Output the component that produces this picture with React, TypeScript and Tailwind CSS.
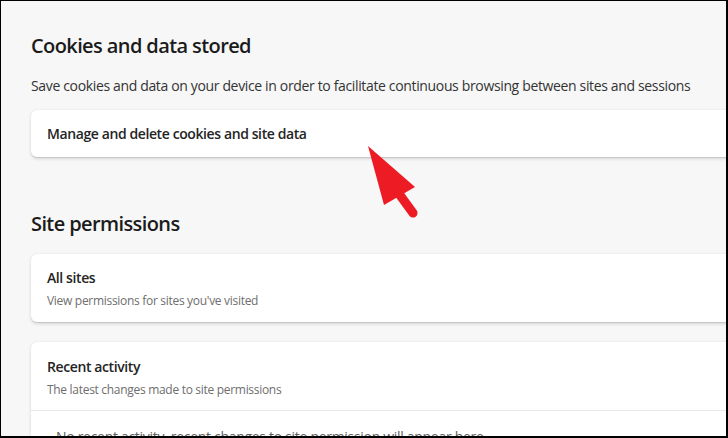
import React from 'react';

const cardShadow =
  'shadow-[0_1.6px_3.6px_rgba(0,0,0,0.13),0_0.3px_0.9px_rgba(0,0,0,0.11)]';

function Arrow() {
  return (
    <svg
      className="absolute left-0 top-0 pointer-events-none"
      width="728"
      height="438"
      viewBox="0 0 728 438"
    >
      <polygon points="367,145 383,204 414,186" fill="#ed1c24" />
      <line
        x1="396"
        y1="190"
        x2="412"
        y2="212"
        stroke="#ed1c24"
        strokeWidth="9"
        strokeLinecap="round"
      />
    </svg>
  );
}

export default function App() {
  return (
    <div
      className="relative w-[728px] h-[438px] overflow-hidden bg-[#f7f7f7] border-t border-l border-r-2 border-b-2 border-black text-[#1b1b1b]"
      style={{ fontFamily: '"Open Sans", "Noto Sans", sans-serif' }}
    >
      <div className="pl-[30px] pt-[31px] w-[760px]">
        {/* Cookies */}
        <h2 className="text-[20px] leading-[28px] font-[550] tracking-[-0.6px]">Cookies and data stored</h2>
        <p className="mt-4 text-[14px] leading-[20px] tracking-[-0.35px] text-[#333]">
          Save cookies and data on your device in order to facilitate continuous browsing between sites and sessions
        </p>
        <div className={`mt-[14px] h-[47px] flex items-center px-4 bg-white rounded-md ${cardShadow}`}>
          <span className="text-[14px] font-[550] tracking-[-0.4px] text-[#242424]">
            Manage and delete cookies and site data
          </span>
        </div>

        {/* Site permissions */}
        <h2 className="mt-[53px] text-[20px] leading-[28px] font-[550] tracking-[-0.6px]">Site permissions</h2>
        <div className={`mt-4 bg-white rounded-md px-4 pt-[14px] pb-[13px] ${cardShadow}`}>
          <div className="text-[14px] leading-[20px] font-[550] tracking-[-0.4px] text-[#242424]">All sites</div>
          <div className="mt-[5px] text-[12px] leading-[16px] tracking-[-0.3px] text-[#6e6e6e]">
            View permissions for sites you've visited
          </div>
        </div>

        <div className={`mt-5 bg-white rounded-md ${cardShadow}`}>
          <div className="px-4 pt-[15px] pb-[12px]">
            <div className="text-[14px] leading-[20px] font-[550] tracking-[-0.4px] text-[#242424]">Recent activity</div>
            <div className="mt-[5px] text-[12px] leading-[16px] tracking-[-0.3px] text-[#6e6e6e]">
              The latest changes made to site permissions
            </div>
          </div>
          <div className="border-t border-[#e8e8e8] pl-[25px] pt-4 pb-4">
            <div className="text-[14px] leading-[20px] tracking-[-0.3px] text-[#616161]">
              No recent activity, recent changes to site permission will appear here
            </div>
          </div>
        </div>
      </div>
      <Arrow />
    </div>
  );
}
